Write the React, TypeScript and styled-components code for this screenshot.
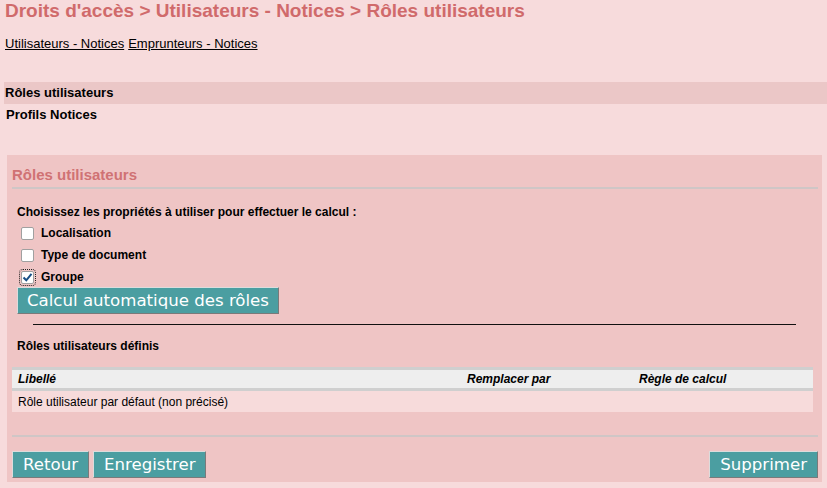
import styled, { createGlobalStyle } from 'styled-components';

const GlobalStyle = createGlobalStyle`
  html, body {
    margin: 0;
    padding: 0;
    background: #f7dbdc;
  }
  body {
    font-family: "Liberation Sans", Arial, sans-serif;
    font-size: 12px;
    color: #000;
  }
`;

const Page = styled.div`
  width: 827px;
  height: 488px;
  overflow: hidden;
  background: #f7dbdc;
`;

const Title = styled.h1`
  margin: 0;
  padding: 0 0 0 5px;
  font-size: 19px;
  line-height: 22px;
  font-weight: bold;
  color: #d06a6b;
`;

const Tabs = styled.div`
  display: flex;
  gap: 4px;
  padding: 14px 0 0 5px;
  line-height: 15px;
`;

const TabLink = styled.a`
  color: #000;
  text-decoration: underline;
  font-size: 13px;
`;

const Menu = styled.div`
  margin-top: 31px;
  padding-left: 4px;
`;

const MenuItem = styled.div<{ $active?: boolean }>`
  height: 22px;
  line-height: 22px;
  padding-left: ${(p) => (p.$active ? '1px' : '2px')};
  font-weight: bold;
  font-size: 13px;
  background: ${(p) => (p.$active ? '#ebc7c7' : 'transparent')};
`;

const Panel = styled.section`
  margin: 29px 5px 0 7px;
  height: 327px;
  background: #efc5c5;
  padding: 0 4px 0 5px;
  display: flex;
  flex-direction: column;
`;

const PanelTitle = styled.h3`
  margin: 0;
  padding-top: 11px;
  height: 21px;
  line-height: 17px;
  font-size: 15px;
  font-weight: bold;
  color: #d07274;
  border-bottom: 2px solid #cfc6c6;
`;

const Body = styled.div`
  padding: 16px 0 0 5px;
`;

const Prompt = styled.div`
  font-weight: bold;
  font-size: 12px;
  line-height: 14px;
`;

const Options = styled.div`
  display: flex;
  flex-direction: column;
  gap: 8px;
  margin-top: 7px;
  padding-left: 4px;
`;

const Option = styled.label`
  display: flex;
  align-items: center;
  gap: 7px;
  height: 14px;
  font-weight: bold;
  font-size: 12px;
`;

const Box = styled.span<{ $focus?: boolean }>`
  width: 13px;
  height: 13px;
  box-sizing: border-box;
  background: #fff;
  border: 1px solid #a0a0a0;
  border-radius: 2px;
  outline: ${(p) => (p.$focus ? '1px dotted #222' : 'none')};
  outline-offset: 1px;
  display: flex;
  align-items: center;
  justify-content: center;
`;

const Check = () => (
  <svg width="11" height="11" viewBox="0 0 11 11">
    <path d="M1.5 5.5 L4.3 8.3 L9.5 1.8" fill="none" stroke="#1a4f86" strokeWidth="2" />
  </svg>
);

const Button = styled.button`
  font-family: "DejaVu Sans", Verdana, sans-serif;
  font-size: 16.6px;
  line-height: 19px;
  color: #fff;
  background: #4b9ea1;
  border: 1px solid;
  border-color: #dcdcdc #7a7a7a #7a7a7a #dcdcdc;
  padding: 3px 10px;
  margin: 0;
  cursor: pointer;
`;

const CalcButton = styled(Button)`
  margin-top: 3px;
  align-self: flex-start;
  padding: 3px 9px;
`;

const Rule = styled.hr`
  margin: 10px 22px 0 16px;
  border: 0;
  border-top: 1px solid #111;
  height: 0;
`;

const SubTitle = styled.div`
  margin-top: 14px;
  font-weight: bold;
  font-size: 12px;
  line-height: 14px;
`;

const Table = styled.table`
  margin-top: 14px;
  width: 801px;
  border-collapse: collapse;
  font-size: 12px;
`;

const Th = styled.th<{ $w?: number }>`
  text-align: left;
  font-style: italic;
  font-weight: bold;
  height: 18px;
  padding: 0 0 0 6px;
  background: #eeeeee;
  border-top: 3px solid #cfcfcf;
  border-bottom: 3px solid #cfcfcf;
  width: ${(p) => (p.$w ? `${p.$w}px` : 'auto')};
`;

const Td = styled.td`
  height: 21px;
  padding: 0 0 0 6px;
  background: #f7dbdb;
`;

const Footer = styled.div`
  margin-top: auto;
  border-top: 2px solid #cfc6c6;
  padding: 14px 0 4px;
  display: flex;
  gap: 4px;
`;

const Spacer = styled.div`
  flex: 1;
`;

const Col = styled.div`
  display: flex;
  flex-direction: column;
`;

const options = [
  { label: 'Localisation', checked: false },
  { label: 'Type de document', checked: false },
  { label: 'Groupe', checked: true },
];

export default function App() {
  return (
    <Page>
      <GlobalStyle />
      <Title>Droits d'accès &gt; Utilisateurs - Notices &gt; Rôles utilisateurs</Title>
      <Tabs>
        <TabLink href="#">Utilisateurs - Notices</TabLink>
        <TabLink href="#">Emprunteurs - Notices</TabLink>
      </Tabs>
      <Menu>
        <MenuItem $active>Rôles utilisateurs</MenuItem>
        <MenuItem>Profils Notices</MenuItem>
      </Menu>
      <Panel>
        <PanelTitle>Rôles utilisateurs</PanelTitle>
        <Col>
          <Body>
            <Col>
              <Prompt>Choisissez les propriétés à utiliser pour effectuer le calcul :</Prompt>
              <Options>
                {options.map((o) => (
                  <Option key={o.label}>
                    <Box $focus={o.checked}>{o.checked && <Check />}</Box>
                    {o.label}
                  </Option>
                ))}
              </Options>
              <CalcButton>Calcul automatique des rôles</CalcButton>
            </Col>
            <Rule />
            <SubTitle>Rôles utilisateurs définis</SubTitle>
          </Body>
          <Table>
            <thead>
              <tr>
                <Th $w={443}>Libellé</Th>
                <Th $w={166}>Remplacer par</Th>
                <Th>Règle de calcul</Th>
              </tr>
            </thead>
            <tbody>
              <tr>
                <Td>Rôle utilisateur par défaut (non précisé)</Td>
                <Td />
                <Td />
              </tr>
            </tbody>
          </Table>
        </Col>
        <Footer>
          <Button>Retour</Button>
          <Button>Enregistrer</Button>
          <Spacer />
          <Button>Supprimer</Button>
        </Footer>
      </Panel>
    </Page>
  );
}
